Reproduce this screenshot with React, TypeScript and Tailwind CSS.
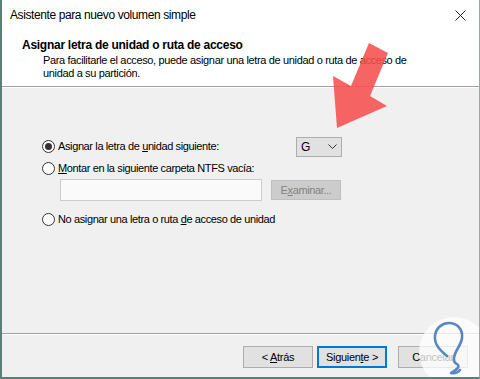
import React from 'react';

const Radio: React.FC<{ checked?: boolean }> = ({ checked }) => (
  <span className="w-[13px] h-[13px] rounded-full border border-[#333] bg-white flex items-center justify-center shrink-0">
    {checked && <span className="w-[7px] h-[7px] rounded-full bg-[#333]"></span>}
  </span>
);

const Button: React.FC<{ children: React.ReactNode; primary?: boolean }> = ({ children, primary }) => (
  <button
    className={
      'w-[70px] h-[22px] flex items-center justify-center text-[11px] tracking-[-0.3px] text-black bg-[#e1e1e1] border ' +
      (primary ? 'border-[#0078d7] shadow-[inset_0_0_0_1px_#0078d7]' : 'border-[#adadad]')
    }
  >
    <span>{children}</span>
  </button>
);

const App: React.FC = () => {
  return (
    <div
      className="relative w-[480px] h-[379px] overflow-hidden bg-white flex flex-col border-l-2 border-r border-b-2 border-l-[#5f7d77] border-r-[#9aa7a4] border-b-[#5f7d77] text-black"
      style={{ fontFamily: '"Liberation Sans", Arial, sans-serif' }}
    >
      {/* title bar */}
      <div className="h-[30px] flex items-center justify-between pl-[8px] pr-[13px] shrink-0">
        <span className="text-[12px] tracking-[-0.4px]">Asistente para nuevo volumen simple</span>
        <svg width="11" height="11" viewBox="0 0 11 11" className="text-[#222]">
          <path d="M0.5 0.5 L10.5 10.5 M10.5 0.5 L0.5 10.5" stroke="currentColor" strokeWidth="1" />
        </svg>
      </div>

      {/* header */}
      <div className="h-[56px] shrink-0 pl-[20px] pt-[8px]">
        <div className="text-[12px] font-bold leading-[15px] tracking-[-0.27px]">Asignar letra de unidad o ruta de acceso</div>
        <div className="pl-[21px] text-[11px] leading-[13px] mt-[1px] tracking-[-0.35px]">
          Para facilitarle el acceso, puede asignar una letra de unidad o ruta de acceso de
          <br />
          unidad a su partición.
        </div>
      </div>

      <div className="h-[2px] shrink-0 bg-[#a0a0a0] border-b border-white"></div>

      {/* body */}
      <div className="flex-1 bg-[#f0f0f0] pl-[40px] pt-[48px] text-[11px] tracking-[-0.38px]">
        <div className="h-[21px] flex items-center">
          <div className="w-[254px] flex items-center gap-[3px]">
            <Radio checked />
            <span>
              Asignar la letra de <u>u</u>nidad siguiente:
            </span>
          </div>
          <div className="w-[46px] h-[20px] bg-[#e1e1e1] border border-[#adadad] flex items-center justify-between pl-[4px] pr-[4px]">
            <span className="text-[12px]">G</span>
            <svg width="9" height="6" viewBox="0 0 9 6">
              <path d="M0.5 0.5 L4.5 4.5 L8.5 0.5" stroke="#333" fill="none" strokeWidth="1" />
            </svg>
          </div>
        </div>
        <div className="h-[22px] flex items-center gap-[3px]">
          <Radio />
          <span>
            <u>M</u>ontar en la siguiente carpeta NTFS vacía:
          </span>
        </div>
        <div className="h-[22px] flex items-center ml-[18px] gap-[9px]">
          <div className="w-[202px] h-[22px] bg-[#fafafa] border border-[#cccccc]"></div>
          <div className="w-[70px] h-[20px] bg-[#cccccc] border border-[#bfbfbf] flex items-center justify-center text-[#838383]">
            <span>
              E<u>x</u>aminar...
            </span>
          </div>
        </div>
        <div className="h-[20px] mt-[8px] flex items-center gap-[3px]">
          <Radio />
          <span>
            No asignar una letra o ruta <u>d</u>e acceso de unidad
          </span>
        </div>
      </div>

      <div className="h-[2px] shrink-0 bg-[#a0a0a0] border-b border-white"></div>

      {/* footer */}
      <div className="h-[42px] shrink-0 bg-[#f0f0f0] flex items-start pt-[11px] pl-[241px]">
        <Button>
          &lt; <u>A</u>trás
        </Button>
        <div className="w-[4px]"></div>
        <Button primary>
          Siguien<u>t</u>e &gt;
        </Button>
        <div className="w-[11px]"></div>
        <Button>Cancelar</Button>
      </div>

      {/* red arrow annotation */}
      <svg className="absolute left-0 top-0 pointer-events-none" width="480" height="379">
        <polygon
          points="367,43 386,53 368,96 385,106 335,128 331,76 349,86"
          fill="rgba(246,78,78,0.88)"
        />
      </svg>

      {/* watermark logo */}
      <svg className="absolute left-[412px] top-[312px] pointer-events-none" width="68" height="67" viewBox="0 0 68 67">
        <circle cx="40" cy="40" r="35" fill="rgba(255,255,255,0.75)" />
        <path
          d="M33 44 C27 39 20 33 21 24 C22 15 29 11 35 11 C43 11 49 17 48 26 C47 34 41 38 40 46 C39 51 42 51 44 53 C46 56 40 59 37 61 C41 62 45 60 46 58"
          fill="none"
          stroke="#5a86c2"
          strokeWidth="2.6"
          strokeLinecap="round"
          strokeLinejoin="round"
        />
      </svg>
    </div>
  );
};

export default App;
